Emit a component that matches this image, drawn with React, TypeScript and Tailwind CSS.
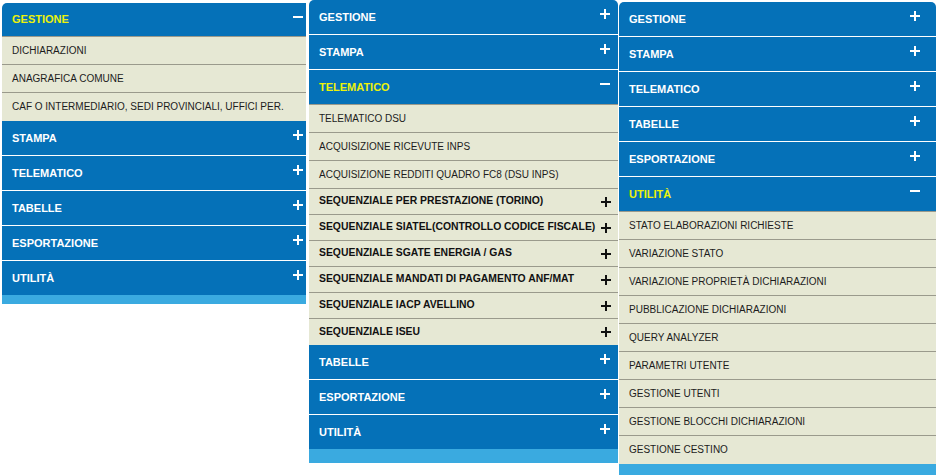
import React from "react";

type Item = { label: string; bold?: boolean };
type Section = { title: string; open?: boolean; tall?: boolean; items?: Item[] };

const font = { fontFamily: '"Liberation Sans", Arial, sans-serif' };

function PlusIcon({ minus = false, dark = false }: { minus?: boolean; dark?: boolean }) {
    const fill = dark ? "#111111" : "#ffffff";
    return (
        <svg width="10" height="10" viewBox="0 0 10 10" className="shrink-0">
            <rect x="0" y="4" width="10" height="2" fill={fill} />
            {!minus && <rect x="4" y="0" width="2" height="10" fill={fill} />}
        </svg>
    );
}

function Header({ title, open, tall, last }: { title: string; open?: boolean; tall?: boolean; last?: boolean }) {
    let box = "h-[35px] border-b border-white";
    if (last) box = "h-[34px]";
    else if (open) box = (tall ? "h-[35px]" : "h-[34px]") + " border-b border-[#9a9a8c]";
    return (
        <div className={"flex items-center bg-[#0571b8] pl-[10px] " + box}>
            <div className="flex w-[291px] items-center justify-between">
                <span
                    className={"text-[11px] font-bold leading-none " + (open ? "text-[#ecf20a]" : "text-white")}
                >
                    {title}
                </span>
                <span className="-translate-y-[3px]">
                    <PlusIcon minus={open} />
                </span>
            </div>
        </div>
    );
}

function Row({ item, last }: { item: Item; last: boolean }) {
    if (item.bold) {
        return (
            <div
                className={
                    "flex h-[26px] items-center bg-[#e6e8d4] pl-[10px] " +
                    (last ? "" : "border-b border-[#9a9a8c]")
                }
            >
                <div className="flex w-[292px] items-center justify-between">
                    <span className="text-[10.4px] font-bold leading-none text-[#111111]">{item.label}</span>
                    <PlusIcon dark />
                </div>
            </div>
        );
    }
    return (
        <div
            className={
                "flex h-[28px] items-center bg-[#e6e8d4] pl-[10px] " + (last ? "" : "border-b border-[#9a9a8c]")
            }
        >
            <span className="text-[10px] leading-none text-[#1c1c1c]">{item.label}</span>
        </div>
    );
}

function Panel({ sections, className, strip }: { sections: Section[]; className: string; strip: string }) {
    return (
        <div className={"shrink-0 overflow-hidden " + className} style={font}>
            {sections.map((s, i) => {
                const last = i === sections.length - 1;
                return (
                    <div key={s.title}>
                        <Header title={s.title} open={s.open} tall={s.tall} last={last && !s.open} />
                        {s.open &&
                            s.items?.map((it, j) => (
                                <Row key={it.label} item={it} last={j === (s.items?.length ?? 0) - 1} />
                            ))}
                    </div>
                );
            })}
            <div className={"bg-[#3aaae0] " + strip} />
        </div>
    );
}

const panelOne: Section[] = [
    {
        title: "GESTIONE",
        open: true,
        items: [
            { label: "DICHIARAZIONI" },
            { label: "ANAGRAFICA COMUNE" },
            { label: "CAF O INTERMEDIARIO, SEDI PROVINCIALI, UFFICI PER." },
        ],
    },
    { title: "STAMPA" },
    { title: "TELEMATICO" },
    { title: "TABELLE" },
    { title: "ESPORTAZIONE" },
    { title: "UTILITÀ" },
];

const panelTwo: Section[] = [
    { title: "GESTIONE" },
    { title: "STAMPA" },
    {
        title: "TELEMATICO",
        open: true,
        tall: true,
        items: [
            { label: "TELEMATICO DSU" },
            { label: "ACQUISIZIONE RICEVUTE INPS" },
            { label: "ACQUISIZIONE REDDITI QUADRO FC8 (DSU INPS)" },
            { label: "SEQUENZIALE PER PRESTAZIONE (TORINO)", bold: true },
            { label: "SEQUENZIALE SIATEL(CONTROLLO CODICE FISCALE)", bold: true },
            { label: "SEQUENZIALE SGATE ENERGIA / GAS", bold: true },
            { label: "SEQUENZIALE MANDATI DI PAGAMENTO ANF/MAT", bold: true },
            { label: "SEQUENZIALE IACP AVELLINO", bold: true },
            { label: "SEQUENZIALE ISEU", bold: true },
        ],
    },
    { title: "TABELLE" },
    { title: "ESPORTAZIONE" },
    { title: "UTILITÀ" },
];

const panelThree: Section[] = [
    { title: "GESTIONE" },
    { title: "STAMPA" },
    { title: "TELEMATICO" },
    { title: "TABELLE" },
    { title: "ESPORTAZIONE" },
    {
        title: "UTILITÀ",
        open: true,
        tall: true,
        items: [
            { label: "STATO ELABORAZIONI RICHIESTE" },
            { label: "VARIAZIONE STATO" },
            { label: "VARIAZIONE PROPRIETÀ DICHIARAZIONI" },
            { label: "PUBBLICAZIONE DICHIARAZIONI" },
            { label: "QUERY ANALYZER" },
            { label: "PARAMETRI UTENTE" },
            { label: "GESTIONE UTENTI" },
            { label: "GESTIONE BLOCCHI DICHIARAZIONI" },
            { label: "GESTIONE CESTINO" },
        ],
    },
];

export default function App() {
    return (
        <div className="flex h-[475px] w-[936px] items-start overflow-hidden bg-white">
            <Panel sections={panelOne} className="ml-[2px] mt-[3px] w-[304px] rounded-tl-[5px]" strip="h-[9px]" />
            <Panel sections={panelTwo} className="ml-[3px] w-[309px] rounded-t-[5px]" strip="h-[14px]" />
            <Panel sections={panelThree} className="ml-[1px] mt-[2px] w-[317px] rounded-t-[5px]" strip="h-[14px]" />
        </div>
    );
}
